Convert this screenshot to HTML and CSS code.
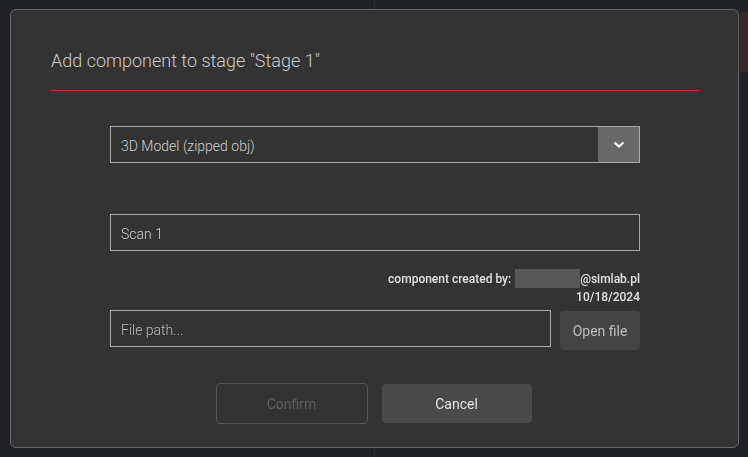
FILE: index.html
```html
<!DOCTYPE html>
<html>
<head>
<meta charset="utf-8">
<link rel="stylesheet" href="styles.css">
</head>
<body>
<div class="page">
  <div class="pane pane-left"></div>
  <div class="pane pane-right"><div class="tab-mark"></div></div>
</div>
<div class="dialog">
  <h2 class="dialog-title">Add component to stage "Stage 1"</h2>
  <div class="divider"></div>
  <div class="form">
    <div class="select">
      <span class="select-value">3D Model (zipped obj)</span>
      <span class="select-btn">
        <svg width="12" height="8" viewBox="0 0 12 8"><polyline points="1.5,1.5 6,5.5 10.5,1.5" fill="none" stroke="#fff" stroke-width="2.2"/></svg>
      </span>
    </div>
    <div class="input name-input">Scan 1</div>
    <div class="meta">
      <div class="meta-line">component created by:<span class="blur"></span>@simlab.pl</div>
      <div class="meta-line">10/18/2024</div>
    </div>
    <div class="file-row">
      <div class="input file-input">File path...</div>
      <button class="btn-open">Open file</button>
    </div>
  </div>
  <div class="actions">
    <button class="btn btn-confirm">Confirm</button>
    <button class="btn btn-cancel">Cancel</button>
  </div>
</div>
</body>
</html>
```
FILE: styles.css
```css
html, body {
  margin: 0;
  padding: 0;
  height: 100%;
}
body {
  background: #212225;
  font-family: Roboto, "Liberation Sans", sans-serif;
  overflow: hidden;
}
.page {
  display: flex;
  height: 457px;
}
.pane-left {
  width: 374px;
  border-right: 1px solid #2e2f32;
}
.pane-right {
  flex: 1;
  display: flex;
  justify-content: flex-end;
  align-items: flex-start;
  padding-top: 12px;
}
.tab-mark {
  width: 8px;
  height: 60px;
  background: #3d2728;
}
.dialog {
  position: fixed;
  left: 10px;
  top: 9px;
  width: 727px;
  height: 437px;
  background: #333333;
  border: 1px solid #676767;
  border-radius: 6px;
  display: flex;
  flex-direction: column;
}
.dialog-title {
  margin: 40px 40px 0 40px;
  font-size: 18px;
  font-weight: 300;
  line-height: 21px;
  color: #cccccc;
}
.divider {
  margin: 19px 39px 0 40px;
  height: 1px;
  background: #b03a2e;
}
.form {
  width: 530px;
  margin: 35px 0 0 99px;
  display: flex;
  flex-direction: column;
}
.select {
  display: flex;
  height: 37px;
  box-sizing: border-box;
  border: 1px solid #a9a9a9;
}
.select-value {
  flex: 1;
  padding: 4px 0 0 10px;
  font-size: 14px;
  font-weight: 300;
  line-height: 31px;
  color: #d0d0d0;
}
.select-btn {
  width: 41px;
  background: #686868;
  display: flex;
  align-items: center;
  justify-content: center;
}
.input {
  height: 37px;
  box-sizing: border-box;
  border: 1px solid #a9a9a9;
  padding: 4px 0 0 10px;
  font-size: 14px;
  font-weight: 300;
  line-height: 31px;
  color: #d0d0d0;
}
.name-input {
  margin-top: 51px;
}
.meta {
  margin-top: 18px;
  display: flex;
  flex-direction: column;
  align-items: flex-end;
  font-size: 12px;
  font-weight: 500;
  line-height: 18px;
  color: #e2e2e2;
}
.meta-line {
  display: flex;
  align-items: center;
}
.blur {
  display: inline-block;
  width: 65px;
  height: 19px;
  background: #575757;
  margin-left: 4px;
}
.file-row {
  margin-top: 4px;
  display: flex;
  align-items: flex-start;
  gap: 9px;
}
.file-input {
  flex: 1;
  color: #bcbcbc;
}
.btn-open {
  margin-top: 1px;
  width: 80px;
  height: 39px;
  border: none;
  border-radius: 4px;
  background: #444444;
  color: #bdbdbd;
  font-family: Roboto, "Liberation Sans", sans-serif;
  font-size: 14px;
  padding: 0;
}
.actions {
  margin-top: 33px;
  padding-right: 2px;
  display: flex;
  justify-content: center;
  align-items: center;
  gap: 14px;
}
.btn {
  font-family: Roboto, "Liberation Sans", sans-serif;
  font-size: 14px;
  border-radius: 4px;
  padding: 0;
}
.btn-confirm {
  width: 152px;
  height: 41px;
  background: transparent;
  border: 1px solid #555555;
  color: #5e5e5e;
}
.btn-cancel {
  width: 150px;
  height: 39px;
  background: #4a4a4a;
  border: none;
  color: #e4e4e4;
}
```
